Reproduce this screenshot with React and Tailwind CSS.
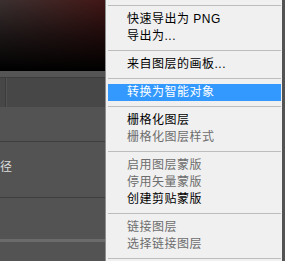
const groups = [
  [
    { label: '快速导出为 PNG' },
    { label: '导出为...' },
  ],
  [{ label: '来自图层的画板...' }],
  [{ label: '转换为智能对象', active: true }],
  [
    { label: '栅格化图层' },
    { label: '栅格化图层样式', disabled: true },
  ],
  [
    { label: '启用图层蒙版', disabled: true },
    { label: '停用矢量蒙版', disabled: true },
    { label: '创建剪贴蒙版' },
  ],
  [
    { label: '链接图层', disabled: true },
    { label: '选择链接图层', disabled: true },
  ],
];

function Separator() {
  return (
    <div className="py-[5px] pl-[2px] pr-[1px]">
      <div className="h-px bg-[#bdbdbd]" />
    </div>
  );
}

function MenuItem({ item }) {
  let cls = 'text-black';
  if (item.active) cls = 'bg-[#3399ff] text-white';
  else if (item.disabled) cls = 'text-[#6d6d6d]';
  return (
    <div className={`ml-[2px] mr-[1px] h-[17px] pl-[19px] leading-[17px] tracking-[0.5px] whitespace-nowrap ${cls}`}>
      {item.label}
    </div>
  );
}

export default function App() {
  return (
    <div
      className="flex h-[261px] w-[285px] overflow-hidden bg-[#535353] text-[12px]"
      style={{ fontFamily: '"Liberation Sans", "Noto Sans CJK SC", sans-serif' }}
    >
      {/* canvas / panels behind the menu */}
      <div className="flex w-[105px] flex-col">
        <div className="h-[71px] bg-linear-to-r from-[#3b3030] to-[#421616]">
          <div className="h-full bg-linear-to-b from-transparent via-[rgba(0,0,0,0.55)] to-black" />
        </div>
        <div className="h-[6px] bg-[#555555]" />
        <div className="h-px bg-[#3c3c3c]" />
        <div className="flex h-[29px] bg-[#474747]">
          <div className="w-[5px]" />
          <div className="w-px bg-[#3c3c3c]" />
          <div className="w-px bg-[#525252]" />
        </div>
        <div className="h-[34px] bg-[#535353]" />
        <div className="h-px bg-[#3e3e3e]" />
        <div className="h-[55px] bg-[#535353] pt-[17px] leading-[16px] text-[#dcdcdc]">径</div>
        <div className="h-px bg-[#3e3e3e]" />
        <div className="h-[41px] bg-[#535353]" />
        <div className="h-[3px] bg-[#6b6b6b]" />
        <div className="flex-1 bg-[#535353]" />
      </div>

      {/* context menu */}
      <div className="flex w-[177px] flex-col border-l border-[#8f8f8f] bg-[#f0f0f0]">
        {groups.map((group, i) => (
          <div key={i}>
            <Separator />
            {group.map((item) => (
              <MenuItem key={item.label} item={item} />
            ))}
          </div>
        ))}
        <Separator />
      </div>

      <div className="w-[3px] bg-[#535353]" />
    </div>
  );
}
